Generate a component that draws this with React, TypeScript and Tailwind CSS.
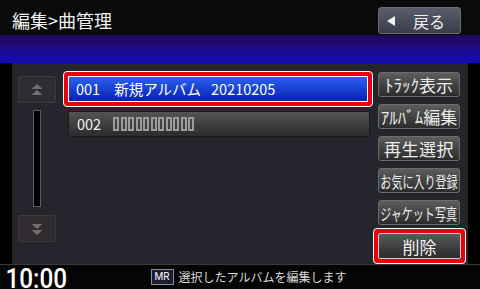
import React from 'react';

const jp = "font-['Noto_Sans_CJK_JP',sans-serif]";

function SideButton({ children }: { children: React.ReactNode }) {
  return (
    <div className="h-[25px] w-[82px] mx-[5px] flex items-center justify-center rounded-[3px] border border-[#6c6c6c] bg-gradient-to-b from-[#5e5e5e] to-[#2b2b2b] text-[#ececec] leading-none overflow-hidden">
      {children}
    </div>
  );
}

function Chevrons({ up }: { up: boolean }) {
  return (
    <svg width="12" height="12" viewBox="0 0 12 12" className={up ? '' : 'rotate-180'}>
      <polygon points="6,0 11.5,5 0.5,5" fill="#6f6f72" />
      <polygon points="6,6 11.5,11 0.5,11" fill="#6f6f72" />
    </svg>
  );
}

// 表示できない文字（豆腐）
const tofu = Array.from({ length: 11 });

export default function App() {
  return (
    <div className={`w-[480px] h-[289px] bg-black flex flex-col overflow-hidden ${jp}`}>
      {/* ヘッダー */}
      <div className="h-[35px] bg-[#0a0a0a] flex items-center justify-between pl-[12px] pr-[19px]">
        <div className="mt-[4px] text-[18px] text-[#f2f2f2] leading-none">編集&gt;曲管理</div>
        <div className="w-[83px] h-[27px] mt-[6px] flex items-center rounded-[3px] border border-[#6b6d7a] bg-gradient-to-b from-[#5a5d6b] to-[#3b3d4a]">
          <svg width="9" height="10" viewBox="0 0 9 10" className="ml-[8px]">
            <polygon points="0,5 8,0 8,10" fill="#f0f0f0" />
          </svg>
          <span className="ml-[17px] text-[16px] text-[#f0f0f0] leading-none">戻る</span>
        </div>
      </div>

      {/* 帯 */}
      <div className="h-[28px] bg-gradient-to-b from-[#21075a] to-[#110bb8]" />

      {/* メイン */}
      <div className="h-[201px] flex">
        <div className="w-[12px] bg-black" />
        <div className="w-[456px] bg-[#24252d] flex pl-[6px] pt-[8px]">
          {/* スクロール */}
          <div className="w-[38px] mt-[5px] flex flex-col items-center">
            <div className="w-[38px] h-[27px] flex items-center justify-center rounded-[2px] border border-[#3a3b42] bg-[#2d2e34]">
              <Chevrons up />
            </div>
            <div className="w-[8px] h-[97px] mt-[7px] bg-black border border-[#5a5a5e]" />
            <div className="w-[38px] h-[27px] mt-[8px] flex items-center justify-center rounded-[2px] border border-[#3d393c] bg-[#302b2f]">
              <Chevrons up={false} />
            </div>
          </div>

          {/* リスト */}
          <div className="w-[310px] ml-[7px] flex flex-col">
            <div className="h-[36px] rounded-[4px] border border-white bg-[#e8000c] p-[4px]">
              <div className="h-full flex items-center border border-white bg-gradient-to-b from-[#2d60f2] to-[#0b1db2] pl-[7px] text-white text-[14.5px] leading-none">
                <span>001</span>
                <span className="ml-[14px]">新規アルバム</span>
                <span className="ml-[10px]">20210205</span>
              </div>
            </div>
            <div className="h-[26px] w-[302px] ml-[5px] mt-[4px] flex items-center rounded-[2px] border border-[#1c1c1c] bg-gradient-to-b from-[#545454] to-[#2c2c2c] pl-[8px] text-[#f0f0f0] text-[14.5px] leading-none">
              <span>002</span>
              <span className="ml-[12px] flex gap-[1.5px]">
                {tofu.map((_, i) => (
                  <span key={i} className="w-[6px] h-[14px] border-2 border-[#9c9c9c]" />
                ))}
              </span>
            </div>
          </div>

          {/* 操作ボタン */}
          <div className="w-[93px] pt-[1px] flex flex-col">
            <div className="flex flex-col gap-[7px]">
              <SideButton><span className="text-[17px]">ﾄﾗｯｸ表示</span></SideButton>
              <SideButton><span className="text-[17px]">ｱﾙﾊﾞﾑ編集</span></SideButton>
              <SideButton><span className="text-[17px] tracking-[0.5px]">再生選択</span></SideButton>
              <SideButton><span className="inline-block text-[16px] whitespace-nowrap scale-x-[0.69]">お気に入り登録</span></SideButton>
              <SideButton><span className="inline-block text-[16px] whitespace-nowrap scale-x-[0.69]">ジャケット写真</span></SideButton>
            </div>
            <div className="h-[36px] mt-[3px] rounded-[4px] border border-white bg-[#e8000c] p-[4px]">
              <div className="h-full flex items-center justify-center rounded-[2px] border border-[#cfcfcf] bg-gradient-to-b from-[#5a5a5a] to-[#2b2b2b] text-[#f0f0f0] text-[17px] leading-none">
                削除
              </div>
            </div>
          </div>
        </div>
        <div className="flex-1 bg-black" />
      </div>

      {/* ステータスバー */}
      <div className="h-[25px] border-t border-[#3a3a3a] bg-[#050505] flex items-center">
        <span className="ml-[2px] mt-[3px] inline-block scale-x-[0.9] font-['Roboto',sans-serif] font-medium text-[27px] leading-[20px] text-white">10:00</span>
        <div className="ml-[80px] w-[23px] h-[16px] flex items-center justify-center border border-[#8c8c98] bg-[#1a1d2e] text-[10px] text-white font-['Roboto',sans-serif] leading-none">
          MR
        </div>
        <span className="ml-[5px] text-[12px] text-[#d8d8d8] leading-none">選択したアルバムを編集します</span>
      </div>
    </div>
  );
}
